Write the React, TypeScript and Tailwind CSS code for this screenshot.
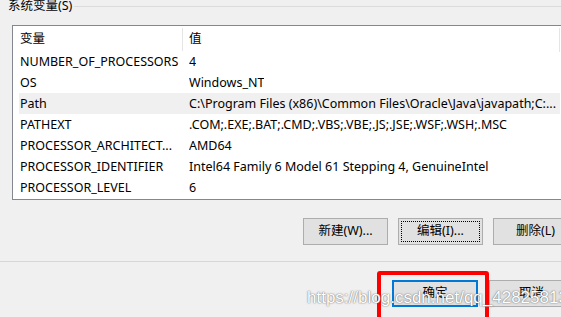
import React from "react";

const rows: [string, string][] = [
  ["NUMBER_OF_PROCESSORS", "4"],
  ["OS", "Windows_NT"],
  ["Path", "C:\\Program Files (x86)\\Common Files\\Oracle\\Java\\javapath;C:..."],
  ["PATHEXT", ".COM;.EXE;.BAT;.CMD;.VBS;.VBE;.JS;.JSE;.WSF;.WSH;.MSC"],
  ["PROCESSOR_ARCHITECT...", "AMD64"],
  ["PROCESSOR_IDENTIFIER", "Intel64 Family 6 Model 61 Stepping 4, GenuineIntel"],
  ["PROCESSOR_LEVEL", "6"],
];

const font = { fontFamily: '"Noto Sans", "Noto Sans CJK SC", sans-serif' };

export default function App() {
  return (
    <div
      className="relative w-[561px] h-[317px] overflow-hidden bg-[#f0f0f0] text-[12.5px] text-black"
      style={font}
    >
      {/* group box title */}
      <div className="flex items-center h-[14px] -mt-[1px]">
        <span className="pl-[8px] pr-[2px] leading-[14px] whitespace-nowrap">系统变量(S)</span>
        <div className="flex-1 h-px bg-[#dcdcdc]" />
      </div>

      {/* list view */}
      <div className="ml-[12px] mt-[12px] w-[560px] h-[175px] border-t border-l border-b border-[#828790] bg-white">
        <div className="flex h-[25px] items-center pt-[2px]">
          <div className="w-[170px] pl-[7px] h-full flex items-center border-r border-[#e5e5e5]">变量</div>
          <div className="pl-[6px] flex-1 h-full flex items-center">值</div>
          <div className="w-px h-[24px] bg-[#e5e5e5] mr-[12px]" />
        </div>
        {rows.map(([k, v]) => (
          <div
            key={k}
            className={
              "flex h-[21px] items-center whitespace-nowrap ml-[6px] mr-[12px] pt-[2px] " +
              (k === "Path" ? "bg-[#f0f0f0]" : "")
            }
          >
            <div className="w-[170px] pl-[1px] overflow-hidden">{k}</div>
            <div className="overflow-hidden">{v}</div>
          </div>
        ))}
      </div>

      {/* action buttons */}
      <div className="flex gap-[10px] pl-[303px] mt-[18px] h-[27px]">
        <div className="w-[85px] shrink-0 h-full border border-[#adadad] bg-[#e1e1e1] flex items-center justify-center">
          新建(W)...
        </div>
        <div className="w-[85px] shrink-0 h-full border border-[#adadad] bg-[#e1e1e1] p-[2px]">
          <div className="w-full h-full border border-dotted border-black flex items-center justify-center">
            编辑(I)...
          </div>
        </div>
        <div className="w-[85px] shrink-0 h-full border border-[#adadad] bg-[#e1e1e1] flex items-center justify-center">
          删除(L)
        </div>
      </div>

      {/* separator */}
      <div className="mt-[16px] h-px bg-[#d7d7d7]" />

      {/* bottom buttons */}
      <div className="flex gap-[11px] pl-[392px] mt-[18px] h-[27px]">
        <div className="w-[86px] shrink-0 h-full border-2 border-[#0078d7] bg-[#e1e1e1] flex items-center justify-center">
          确定
        </div>
        <div className="w-[85px] shrink-0 h-full border border-[#adadad] bg-[#e1e1e1] flex items-center justify-center">
          取消
        </div>
      </div>

      {/* red highlight */}
      <div className="absolute left-[377px] top-[271px] w-[112px] h-[52px] border-4 border-[#ff0000] rounded-[3px]" />

      {/* watermark */}
      <div
        className="absolute left-[307px] top-[288px] text-[17px] leading-[20px] text-white whitespace-nowrap"
        style={{
          fontFamily: '"Liberation Sans", Arial, sans-serif',
          textShadow: "0 0 1px rgba(90,90,90,0.9), 0 0 2px rgba(120,120,120,0.7)",
        }}
      >
        https://blog.csdn.net/qq_42825813
      </div>
    </div>
  );
}
